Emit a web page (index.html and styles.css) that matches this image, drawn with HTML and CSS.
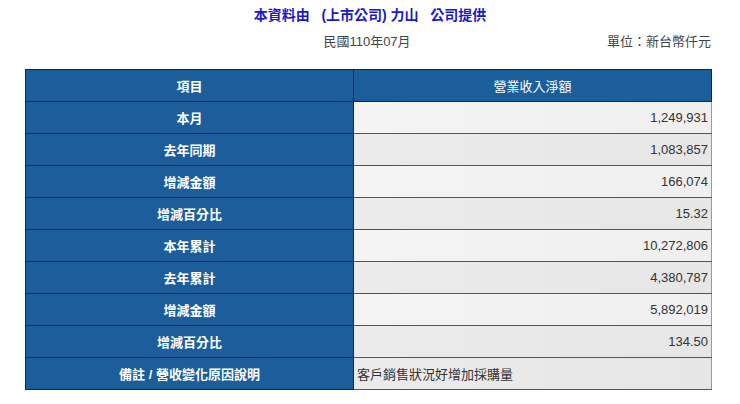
FILE: index.html
```html
<!DOCTYPE html>
<html lang="zh-Hant">
<head>
<meta charset="utf-8">
<title>營業收入</title>
<link rel="stylesheet" href="styles.css">
</head>
<body>
<div class="page">
  <div class="title">本資料由&nbsp;&nbsp;&nbsp;(上市公司) 力山&nbsp;&nbsp;&nbsp;公司提供</div>
  <div class="subrow">
    <div class="date">民國110年07月</div>
    <div class="unit">單位：新台幣仟元</div>
  </div>
  <table class="rev">
    <tr class="head"><th class="lab">項目</th><th class="hv">營業收入淨額</th></tr>
    <tr class="lt"><th class="lab">本月</th><td class="num">1,249,931</td></tr>
    <tr class="dk"><th class="lab">去年同期</th><td class="num">1,083,857</td></tr>
    <tr class="lt"><th class="lab">增減金額</th><td class="num">166,074</td></tr>
    <tr class="dk"><th class="lab">增減百分比</th><td class="num">15.32</td></tr>
    <tr class="lt"><th class="lab">本年累計</th><td class="num">10,272,806</td></tr>
    <tr class="dk"><th class="lab">去年累計</th><td class="num">4,380,787</td></tr>
    <tr class="lt"><th class="lab">增減金額</th><td class="num">5,892,019</td></tr>
    <tr class="dk"><th class="lab">增減百分比</th><td class="num">134.50</td></tr>
    <tr class="dk"><th class="lab">備註 / 營收變化原因說明</th><td class="note">客戶銷售狀況好增加採購量</td></tr>
  </table>
</div>
</body>
</html>
```
FILE: styles.css
```css
html, body {
  margin: 0;
  padding: 0;
  background: #ffffff;
}
body {
  font-family: "Liberation Sans", Arial, "Noto Sans CJK TC", sans-serif;
  color: #333333;
}
.page {
  width: 740px;
}
.title {
  height: 30px;
  line-height: 30px;
  text-align: center;
  font-size: 14px;
  font-weight: bold;
  color: #1a1acc;
}
.subrow {
  position: relative;
  height: 24px;
  line-height: 24px;
  font-size: 13px;
  color: #444444;
}
.date {
  text-align: center;
  margin-left: -6px;
}
.unit {
  position: absolute;
  right: 29px;
  top: 0;
}
.rev {
  margin: 15px 0 0 25px;
  width: 687px;
  border-collapse: collapse;
  font-size: 13px;
}
.rev th, .rev td {
  height: 32px;
  padding: 0;
  box-sizing: border-box;
}
.rev .lab {
  width: 328px;
  background: #1b5e9b;
  color: #ffffff;
  font-weight: bold;
  text-align: center;
  border: 1px solid #0c2b4a;
}
.rev .hv {
  background: #1b5e9b;
  color: #ffffff;
  font-weight: normal;
  text-align: center;
  border: 1px solid #0c2b4a;
}
.rev td {
  border-top: 1px solid #555555;
  border-bottom: 1px solid #555555;
  border-right: 1px solid #9a9a9a;
  color: #333333;
}
.rev tr.lt td {
  background: linear-gradient(to right, #f4f4f4, #efefef);
}
.rev tr.dk td {
  background: linear-gradient(to right, #ebebeb, #e6e6e6);
}
.rev .num {
  text-align: right;
  padding-right: 3px;
}
.rev .note {
  text-align: left;
  padding-left: 3px;
}
```
